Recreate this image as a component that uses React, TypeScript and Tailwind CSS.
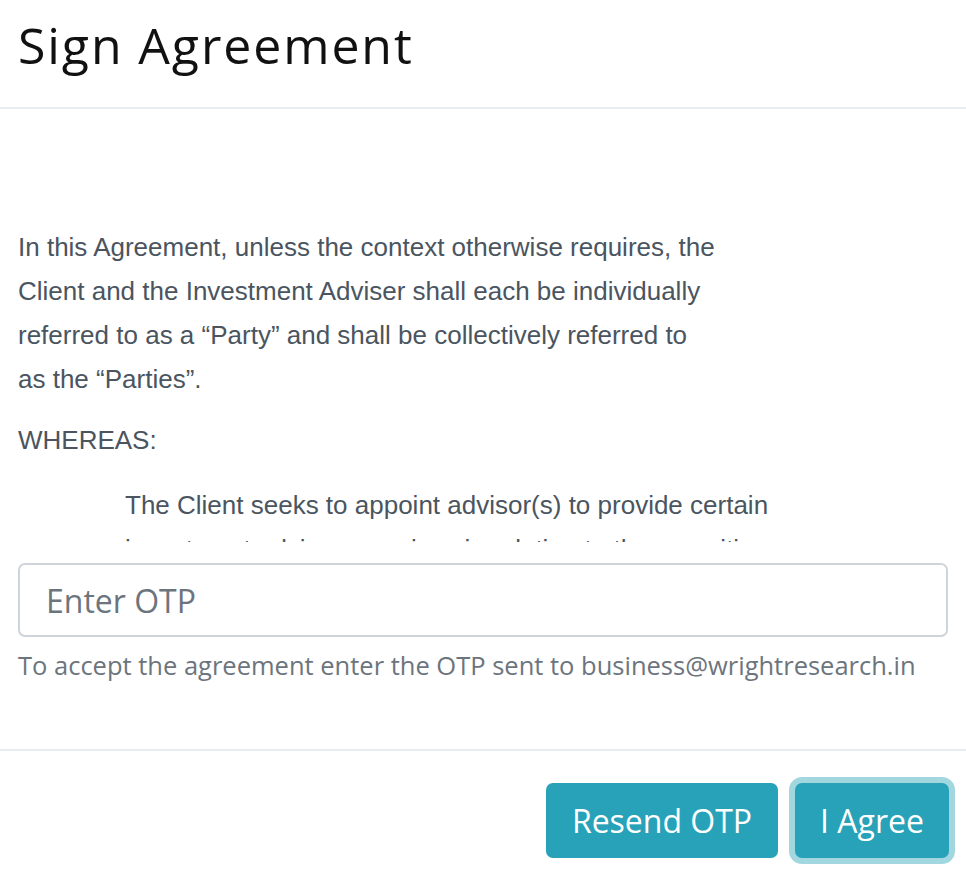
const App = () => {
  return (
    <div className="flex flex-col h-[880px] w-[966px] bg-white overflow-hidden">
      {/* header */}
      <div className="h-[109px] shrink-0 border-b-2 border-[#e9ecef] px-[18px] pt-[20px]">
        <h1 className="text-[50px] leading-none tracking-[1.9px] text-[#111] font-['Open_Sans',sans-serif]">
          Sign Agreement
        </h1>
      </div>

      {/* body */}
      <div className="h-[640px] shrink-0 flex flex-col px-[18px]">
        <div className="h-[433px] overflow-hidden pt-[116px] text-[26px] leading-[44px] text-[#4a5560] font-['Liberation_Sans',Arial,sans-serif]">
          <p className="w-[700px]">
            In this Agreement, unless the context otherwise requires, the Client and the Investment Adviser shall each be individually referred to as a “Party” and shall be collectively referred to as the “Parties”.
          </p>
          <p className="mt-[17px]">WHEREAS:</p>
          <p className="mt-[21px] pl-[107px] w-[800px]">
            The Client seeks to appoint advisor(s) to provide certain investment advisory services in relation to the securities market to the Client
          </p>
        </div>

        <input
          placeholder="Enter OTP"
          className="mt-[21px] h-[74px] w-full rounded-[7px] border-2 border-[#ced4da] px-[26px] text-[32px] text-[#495057] placeholder:text-[#6c757d] font-['Open_Sans',sans-serif] outline-none"
        />
        <p className="mt-[10px] text-[25.5px] leading-[36px] text-[#6c757d] font-['Open_Sans',sans-serif]">
          To accept the agreement enter the OTP sent to business@wrightresearch.in
        </p>
      </div>

      {/* footer */}
      <div className="flex-1 border-t-2 border-[#e9ecef] flex justify-end items-start gap-[17px] pt-[32px] pr-[17px] font-['Open_Sans',sans-serif]">
        <button className="h-[75px] w-[232px] rounded-[7px] bg-[#27a2b8] text-white text-[32px]">
          Resend OTP
        </button>
        <button className="h-[75px] w-[154px] rounded-[7px] bg-[#27a2b8] text-white text-[32px] ring-[6px] ring-[#a3d7e0]">
          I Agree
        </button>
      </div>
    </div>
  );
};

export default App;
